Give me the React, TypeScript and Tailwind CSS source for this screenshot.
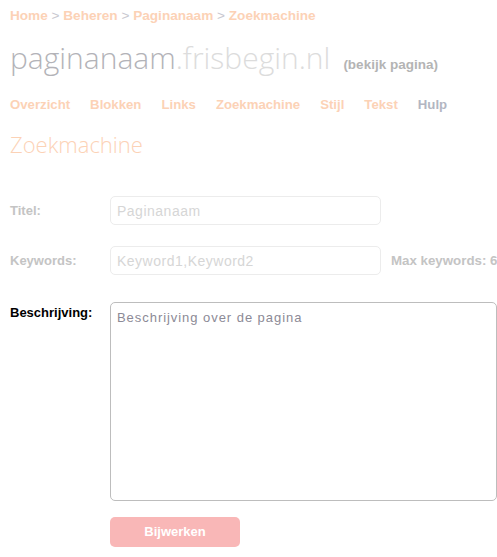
const label = "w-[100px] shrink-0 text-[13px] font-bold text-[#c4c4c4]";
const input =
  "h-[29px] w-[271px] shrink-0 rounded-[5px] border border-[#ececec] bg-white px-[6px] text-[14px] tracking-[0.5px] text-[#ccc] placeholder:text-[#d6d6d6] outline-none";

const nav = ["Overzicht", "Blokken", "Links", "Zoekmachine", "Stijl", "Tekst"];

export default function App() {
  return (
    <div className="min-h-[557px] w-[497px] overflow-hidden bg-white px-[10px] font-['Liberation_Sans',Arial,sans-serif]">
      <div className="whitespace-nowrap pt-[7px] text-[13.6px] font-bold leading-[17px] text-[#fcd2b6]">
        Home <span className="font-normal text-[#c8c8d0]">&gt;</span> Beheren{" "}
        <span className="font-normal text-[#c8c8d0]">&gt;</span> Paginanaam{" "}
        <span className="font-normal text-[#c8c8d0]">&gt;</span> Zoekmachine
      </div>

      <div className="mt-[15px] flex items-baseline whitespace-nowrap">
        <span className="font-['Open_Sans',sans-serif] text-[30px] leading-[38px] font-light text-[#b3b3b8]">
          paginanaam<span className="text-[#dcdcdc]">.frisbegin.nl</span>
        </span>
        <span className="ml-[13px] text-[13.5px] font-bold text-[#b4b4b4]">(bekijk pagina)</span>
      </div>

      <div className="mt-[19px] flex gap-[20px] whitespace-nowrap text-[13.2px] font-bold leading-[17px] text-[#fcd2b6]">
        {nav.map((n) => (
          <span key={n}>{n}</span>
        ))}
        <span className="text-[#b3b6c2]">Hulp</span>
      </div>

      <h1 className="mt-[16px] font-['Open_Sans',sans-serif] text-[22px] leading-[30px] font-light text-[#fcd2b6]">
        Zoekmachine
      </h1>

      <div className="mt-[37px] flex items-center whitespace-nowrap">
        <span className={label}>Titel:</span>
        <input className={input} placeholder="Paginanaam" />
      </div>

      <div className="mt-[21px] flex items-center whitespace-nowrap">
        <span className={label}>Keywords:</span>
        <input className={input} placeholder="Keyword1,Keyword2" />
        <span className="ml-[10px] shrink-0 text-[13.3px] font-bold text-[#c4c4c4]">Max keywords: 6</span>
      </div>

      <div className="mt-[27px] flex items-start">
        <span className="w-[100px] shrink-0 pt-[1px] text-[13px] font-bold text-black">Beschrijving:</span>
        <textarea
          className="h-[199px] w-[387px] shrink-0 resize-none rounded-[5px] border border-[#bdbdbd] px-[6px] pt-[5px] pb-[7px] text-[13px] tracking-[0.95px] text-[#888] placeholder:text-[#8c8a96] outline-none"
          placeholder="Beschrijving over de pagina"
        />
      </div>

      <div className="mt-[16px] pl-[100px]">
        <button className="h-[30px] w-[130px] rounded-[5px] bg-[#f9b7b7] text-[13px] font-bold text-white">
          Bijwerken
        </button>
      </div>
    </div>
  );
}
